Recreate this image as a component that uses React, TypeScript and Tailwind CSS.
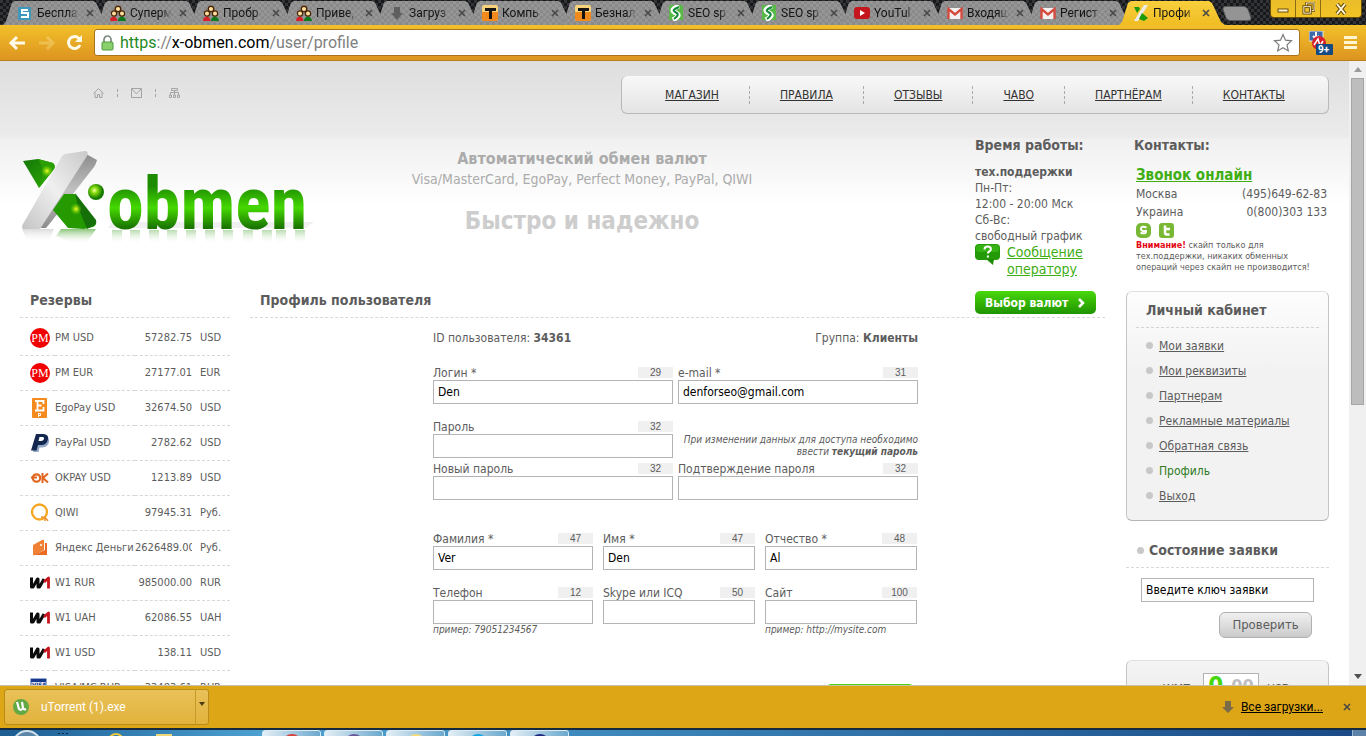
import type { ReactNode } from 'react';

const tabs = [
  { title: 'Беспла', icon: 's' },
  { title: 'Суперм', icon: 'people' },
  { title: 'Пробр', icon: 'people' },
  { title: 'Приве,', icon: 'people' },
  { title: 'Загруз', icon: 'down' },
  { title: 'Компь', icon: 't' },
  { title: 'Безнал', icon: 't' },
  { title: 'SEO sp', icon: 'seo' },
  { title: 'SEO sp', icon: 'seo' },
  { title: 'YouTul', icon: 'youtube' },
  { title: 'Входящ', icon: 'gmail' },
  { title: 'Регист', icon: 'gmail' },
  { title: 'Профи', icon: 'x', active: true },
];

const navLinks = ['МАГАЗИН', 'ПРАВИЛА', 'ОТЗЫВЫ', 'ЧАВО', 'ПАРТНЁРАМ', 'КОНТАКТЫ'];

const reserves = [
  { name: 'PM USD', amount: '57282.75', unit: 'USD', icon: 'pm' },
  { name: 'PM EUR', amount: '27177.01', unit: 'EUR', icon: 'pm' },
  { name: 'EgoPay USD', amount: '32674.50', unit: 'USD', icon: 'ego' },
  { name: 'PayPal USD', amount: '2782.62', unit: 'USD', icon: 'paypal' },
  { name: 'OKPAY USD', amount: '1213.89', unit: 'USD', icon: 'ok' },
  { name: 'QIWI', amount: '97945.31', unit: 'Руб.', icon: 'qiwi' },
  { name: 'Яндекс Деньги', amount: '2626489.00', unit: 'Руб.', icon: 'yandex' },
  { name: 'W1 RUR', amount: '985000.00', unit: 'RUR', icon: 'w1' },
  { name: 'W1 UAH', amount: '62086.55', unit: 'UAH', icon: 'w1' },
  { name: 'W1 USD', amount: '138.11', unit: 'USD', icon: 'w1' },
  { name: 'VISA/MC RUR', amount: '33483.61', unit: 'RUR', icon: 'visa' },
];

const cabinetLinks = [
  'Мои заявки',
  'Мои реквизиты',
  'Партнерам',
  'Рекламные материалы',
  'Обратная связь',
  'Профиль',
  'Выход',
];

function TabIcon({ name }: { name: string }) {
  return (
    <svg viewBox="0 0 16 16" className="h-4 w-4 flex-none">
      {name === 's' && (
        <>
          <rect x="1" y="2" width="13" height="13" rx="1" fill="#3f97bb" />
          <path d="M11 5H5v3h6v4H4" fill="none" stroke="#fff" strokeWidth="2" />
        </>
      )}
      {name === 'people' && (
        <>
          <path d="M0 16c0-6 7-6 7.500 0z" fill="#d6202b" />
          <path d="M8 16c0-6 7.500-6 8 0z" fill="#0c7a1c" />
          <circle cx="8" cy="4" r="2.800" fill="#ffe0a0" stroke="#4a2606" strokeWidth="1.400" />
          <circle cx="4" cy="8.500" r="2.600" fill="#ffe0a0" stroke="#4a2606" strokeWidth="1.200" />
          <circle cx="12" cy="8.500" r="2.600" fill="#ffe0a0" stroke="#4a2606" strokeWidth="1.200" />
        </>
      )}
      {name === 'down' && <path d="M5 2h6v6h3l-6 7-6-7h3z" fill="#5f5f5f" />}
      {name === 't' && (
        <>
          <rect width="16" height="16" rx="2" fill="#f6d27a" />
          <path d="M0 7h16v7a2 2 0 0 1-2 2H2a2 2 0 0 1-2-2z" fill="#f08a1c" />
          <path d="M3 3h11v3H10v8H7V6H3z" fill="#171310" />
        </>
      )}
      {name === 'seo' && (
        <>
          <rect x="1" width="14" height="15" fill="#58b947" />
          <path d="M11 1C3 4 4 6 8 8s2 4-3 7" fill="none" stroke="#fff" strokeWidth="5" />
          <path d="M11 2C4 5 5 6 8 7.500S10 11 6 14" fill="none" stroke="#168a3a" strokeWidth="2" />
        </>
      )}
      {name === 'youtube' && (
        <>
          <rect y="2" width="16" height="12" rx="3" fill="#c4161c" />
          <path d="M6 5l5 3-5 3z" fill="#fff" />
        </>
      )}
      {name === 'gmail' && (
        <>
          <rect x="1" y="3" width="14" height="11" fill="#f3f0ef" />
          <path d="M1.500 14V4L8 9.500 14.500 4v10" fill="none" stroke="#d5483c" strokeWidth="2.300" />
        </>
      )}
      {name === 'x' && (
        <>
          <path d="M11 0h4L5 16H1z" fill="#ececec" />
          <path d="M1 2h5l1 2-3 4z" fill="#1c9a0a" />
          <path d="M9 8l6 5-4 3-5-2z" fill="#1c9a0a" />
        </>
      )}
    </svg>
  );
}

function Cross() {
  return (
    <svg viewBox="0 0 8 8" className="h-2 w-2">
      <path d="M1 1l6 6M7 1L1 7" stroke="#484848" strokeWidth="1.600" />
    </svg>
  );
}

function TabStrip() {
  return (
    <div className="flex h-[25px] flex-none items-end overflow-hidden bg-[#26272a] bg-[repeating-conic-gradient(#17181a_0_25%,#333438_0_50%)] bg-[length:6px_6px] pl-[3px]">
      {tabs.map((tab, i) => (
        <div
          key={i}
          className={`-mr-[13px] flex h-6 w-[106px] flex-none items-center pl-[14px] [clip-path:polygon(0_100%,3px_88%,9px_8%,12px_0,90px_0,93px_8%,102px_88%,106px_100%)] ${
            tab.active
              ? 'z-10 bg-linear-to-b from-[#f8cf3c] to-[#f0bd22]'
              : 'bg-[#8f8f8f] bg-[repeating-conic-gradient(#8a8a8a_0_25%,#969696_0_50%)] bg-[length:6px_6px]'
          }`}
        >
          <TabIcon name={tab.icon} />
          <span className="ml-1 w-[42px] flex-none text-xs whitespace-nowrap text-[#141414] [mask-image:linear-gradient(to_right,#000_75%,transparent)]">
            {tab.title}
          </span>
          <button type="button" aria-label="Закрыть" className="ml-[3px] flex h-4 w-4 items-center justify-center">
            <Cross />
          </button>
        </div>
      ))}
      <button
        type="button"
        aria-label="Новая вкладка"
        className="mb-1 ml-3 h-[15px] w-[26px] flex-none skew-x-[20deg] rounded-sm border border-[#5a5a5a] bg-[#949494]"
      />
      <div className="mr-1 ml-auto flex h-[18px] self-start overflow-hidden rounded-b border border-t-0 border-[#6b4d08] bg-linear-to-b from-[#e9bd2a] to-[#f3c425]">
        <button type="button" aria-label="Свернуть" className="flex w-[25px] items-center justify-center border-r border-[#8a6a14]">
          <svg viewBox="0 0 12 12" className="h-3 w-3">
            <rect x="1" y="6" width="10" height="3" fill="#fff6d8" stroke="#6b4d08" />
          </svg>
        </button>
        <button type="button" aria-label="Развернуть" className="flex w-[25px] items-center justify-center border-r border-[#8a6a14]">
          <svg viewBox="0 0 14 14" className="h-[13px] w-[13px]">
            <rect x="5" y="1" width="8" height="8" fill="none" stroke="#6b4d08" strokeWidth="3" />
            <rect x="5" y="1" width="8" height="8" fill="none" stroke="#fff6d8" />
            <rect x="2" y="5" width="7" height="7" fill="#eec22a" stroke="#6b4d08" strokeWidth="3" />
            <rect x="2" y="5" width="7" height="7" fill="none" stroke="#fff6d8" />
          </svg>
        </button>
        <button type="button" aria-label="Закрыть окно" className="flex w-10 items-center justify-center">
          <svg viewBox="0 0 12 12" className="h-3 w-3">
            <path d="M2 1l8 10M10 1L2 11" stroke="#6b4d08" strokeWidth="4" />
            <path d="M2 1l8 10M10 1L2 11" stroke="#fff6d8" strokeWidth="2" />
          </svg>
        </button>
      </div>
    </div>
  );
}

function Toolbar() {
  return (
    <div className="flex h-9 flex-none items-center border-b border-[#b8801c] bg-linear-to-b from-[#f2c02a] to-[#dd9420] pr-[9px] pl-2">
      <button type="button" aria-label="Назад" className="h-5 w-5">
        <svg viewBox="0 0 20 20" className="h-5 w-5" fill="none" stroke="#fffbe8" strokeWidth="3">
          <path d="M17 10H4M9 4l-6 6 6 6" />
        </svg>
      </button>
      <button type="button" aria-label="Вперед" className="ml-2 h-5 w-5 opacity-30">
        <svg viewBox="0 0 20 20" className="h-5 w-5" fill="none" stroke="#fff2b0" strokeWidth="3">
          <path d="M3 10h13M11 4l6 6-6 6" />
        </svg>
      </button>
      <button type="button" aria-label="Обновить" className="ml-2 h-5 w-5">
        <svg viewBox="0 0 20 20" className="h-5 w-5">
          <path d="M15 5.500A6 6 0 1 0 16 12" fill="none" stroke="#fffbe8" strokeWidth="3" />
          <path d="M18 2v7h-7z" fill="#fffbe8" />
        </svg>
      </button>
      <div className="ml-[10px] flex h-[27px] flex-1 items-center rounded-[3px] border border-[#a8741a] bg-white px-[6px]">
        <svg viewBox="0 0 13 16" className="h-4 w-[13px] flex-none">
          <path d="M3 8V4.500a3.500 3.500 0 0 1 7 0V8" fill="none" stroke="#7b8a80" strokeWidth="1.700" />
          <rect x="1" y="7" width="11" height="8" rx="1" fill="#8ad06c" stroke="#4c9a3c" />
        </svg>
        <a href="#url" className="ml-[6px] flex-1 text-base whitespace-nowrap text-[#808080]">
          <span className="text-[#1e8a1e]">https</span>://<span className="text-black">x-obmen.com</span>/user/profile
        </a>
        <svg viewBox="0 0 20 20" className="h-5 w-5 flex-none" fill="#fff" stroke="#7a7a7a" strokeWidth="1.200">
          <path d="M10 1.500l2.500 5.700 6 .6-4.500 4.100 1.300 6L10 14.800l-5.300 3.100 1.300-6L1.500 7.800l6-.6z" />
        </svg>
      </div>
      <svg viewBox="0 0 24 24" className="ml-[9px] h-6 w-6 flex-none">
        <rect x="0" y="0" width="14" height="10" fill="#3c68a8" stroke="#e8e8e8" />
        <path d="M7 1v6M4 5l3 3 3-3" stroke="#fff" strokeWidth="2" fill="none" />
        <circle cx="10" cy="12" r="7" fill="#d8202a" />
        <path d="M5 14l4-6 2 7 3-5" stroke="#fff" strokeWidth="1.500" fill="none" />
        <rect x="7" y="13" width="17" height="11" rx="1" fill="#134a86" />
        <text x="9" y="22" fontSize="10" fontWeight="700" fill="#fff">
          9+
        </text>
      </svg>
      <button type="button" aria-label="Меню" className="ml-[11px] flex w-[13px] flex-col gap-[2px]">
        <span className="h-[3px] bg-[#fff6d0]" />
        <span className="h-[3px] bg-[#fff6d0]" />
        <span className="h-[3px] bg-[#fff6d0]" />
      </button>
    </div>
  );
}

function Logo() {
  return (
    <a href="#home" aria-label="X-obmen" className="block w-[300px]">
      <svg viewBox="0 0 300 105" className="h-[105px] w-[300px]">
        <defs>
          <linearGradient id="silver" x1="1" y1="0" x2="0" y2="1">
            <stop offset="0" stopColor="#c9c9c9" />
            <stop offset="0.500" stopColor="#efefef" />
            <stop offset="1" stopColor="#c4c4c4" />
          </linearGradient>
          <linearGradient id="edge" x1="0" y1="0" x2="0" y2="1">
            <stop offset="0" stopColor="#8c8c8c" />
            <stop offset="0.500" stopColor="#c2c2c2" />
            <stop offset="1" stopColor="#8c8c8c" />
          </linearGradient>
          <linearGradient id="word" x1="0" y1="0" x2="0" y2="1">
            <stop offset="0.300" stopColor="#1d8c00" />
            <stop offset="0.550" stopColor="#46d800" />
            <stop offset="0.780" stopColor="#1a7400" />
          </linearGradient>
          <linearGradient id="leaf" x1="0" y1="0" x2="1" y2="1">
            <stop offset="0" stopColor="#14750a" />
            <stop offset="1" stopColor="#2fae00" />
          </linearGradient>
          <linearGradient id="fade" x1="0" y1="0" x2="0" y2="1">
            <stop offset="0" stopColor="#3a9d20" stopOpacity="0.600" />
            <stop offset="1" stopColor="#fff" stopOpacity="0" />
          </linearGradient>
          <linearGradient id="greyfade" x1="0" y1="0" x2="0" y2="1">
            <stop offset="0" stopColor="#999" stopOpacity="0.350" />
            <stop offset="1" stopColor="#fff" stopOpacity="0" />
          </linearGradient>
          <radialGradient id="ball" cx="0.400" cy="0.400">
            <stop offset="0" stopColor="#fdffb0" />
            <stop offset="0.350" stopColor="#8be010" />
            <stop offset="1" stopColor="#167a00" />
          </radialGradient>
          <radialGradient id="glow">
            <stop offset="0" stopColor="#f6ff20" />
            <stop offset="1" stopColor="#5fd000" stopOpacity="0" />
          </radialGradient>
        </defs>
        <path d="M88 78l4-6h202l-8 6z" fill="#000" opacity="0.060" />
        <path d="M41 79h35l-8 12q-9 6-20 0l-12-5z" fill="url(#fade)" />
        <path d="M2 79h32l-6 14H8z" fill="url(#greyfade)" />
        <path d="M66 4l11 6q-1 4-3 7L31 72l-5 6H19z" fill="url(#edge)" />
        <path d="M41 8q1-3 4-4l20-3q4 0 2 5L20 79H3q-2-2 0-5z" fill="url(#silver)" />
        <path d="M3 11l15-2 15 4q3 3 1 6L19 38z" fill="url(#leaf)" />
        <path d="M18 9l15 4q3 3 1 6L19 38q8-16-1-29z" fill="#2b9f04" />
        <circle cx="27" cy="21" r="6" fill="url(#glow)" />
        <path d="M44 44h11l21 27q1 4-3 6l-9 2-16-1L33 60z" fill="#249a00" />
        <path d="M55 43l21 27q1 4-3 6l-6 3-9-22z" fill="#16700a" />
        <circle cx="56" cy="59" r="6" fill="url(#glow)" />
        <circle cx="76" cy="42" r="8" fill="url(#ball)" />
        <text
          x="87"
          y="79"
          fontSize="74"
          fontWeight="700"
          fill="url(#word)"
          className="font-['Liberation_Sans_Narrow','Roboto_Condensed','Roboto',sans-serif]"
        >
          obmen
        </text>
        {[92, 110, 129, 147, 166, 185, 203, 223, 242, 256, 275].map((x) => (
          <rect key={x} x={x} y="80" width="10" height="14" fill="url(#fade)" opacity="0.600" />
        ))}
      </svg>
    </a>
  );
}

function SiteHeader() {
  return (
    <header className="px-5 pt-[15px]">
      <div className="flex justify-between">
        <div className="mt-[11px] ml-[73px] flex h-3 items-center gap-[13px] text-[#a4a4a4]">
          <a href="#home" aria-label="Главная">
            <svg viewBox="0 0 11 10" className="h-[10px] w-[11px]" fill="none" stroke="currentColor">
              <path d="M0.500 5.500l5-5 5 5M2 4.500v5h2.500v-3h2v3H9v-5" />
            </svg>
          </a>
          <i className="h-2 border-l border-dashed border-current" />
          <a href="#mail" aria-label="Почта">
            <svg viewBox="0 0 11 10" className="h-[10px] w-[11px]" fill="none" stroke="currentColor">
              <path d="M0.500 0.500h10v9H0.500zM1 1l4.500 5L10 1" />
            </svg>
          </a>
          <i className="h-2 border-l border-dashed border-current" />
          <a href="#map" aria-label="Карта сайта">
            <svg viewBox="0 0 11 10" className="h-[10px] w-[11px]" fill="none" stroke="currentColor">
              <path d="M2.500 0.500h6v2h-6zM5.500 3v4M1.500 7V4.500h8V7M0.500 7h2v2.500h-2zM4.500 7h2v2.500h-2zM8.500 7h2v2.500h-2z" />
            </svg>
          </a>
        </div>
        <nav className="flex h-[38px] w-[708px] items-center justify-center rounded-md border-r border-b border-l border-[#b9b9b9] bg-linear-to-b from-[#f8f8f8] to-[#e4e4e4] text-xs text-[#333]">
          {navLinks.map((link, i) => (
            <span key={link} className={`flex h-[18px] items-center px-[30px] ${i ? 'border-l border-dashed border-[#aaa]' : ''}`}>
              <a href="#nav" className="underline">
                {link}
              </a>
            </span>
          ))}
        </nav>
      </div>

      <div className="flex h-[177px]">
        <div className="pt-9">
          <Logo />
        </div>
        <div className="w-[524px] pt-[35px] text-center">
          <p className="text-base leading-5 font-bold text-[#ababab]">Автоматический обмен валют</p>
          <p className="text-sm leading-5 text-[#ababab]">Visa/MasterCard, EgoPay, Perfect Money, PayPal, QIWI</p>
          <p className="mt-5 text-2xl leading-6 font-bold text-[#cdcdcd]">Быстро и надежно</p>
        </div>
        <div className="ml-auto w-[151px] pt-[23px] text-xs leading-4">
          <h2 className="text-sm leading-4 font-bold">Время работы:</h2>
          <p className="mt-[11px] font-bold">тех.поддержки</p>
          <p>
            Пн-Пт:
            <br />
            12:00 - 20:00 Мск
            <br />
            Сб-Вс:
            <br />
            свободный график
          </p>
          <div className="flex">
            <svg viewBox="0 0 26 21" className="h-[21px] w-[26px] flex-none">
              <rect width="25" height="16" y="0" rx="4" fill="#249a08" />
              <path d="M11 15h8l-1 6z" fill="#1f8a06" />
              <rect x="1" y="1" width="23" height="7" rx="3" fill="#43c41c" opacity="0.600" />
              <path d="M9.500 5.500q0-3 3.200-3t3.200 2.700q0 1.500-1.700 2.300-1.300.7-1.300 2M12.900 11.500v2" stroke="#fff" strokeWidth="2" fill="none" />
            </svg>
            <a href="#operator" className="ml-[6px] text-sm leading-[17px] text-[#3fae14] underline">
              Сообщение
              <br />
              оператору
            </a>
          </div>
        </div>
        <div className="w-[203px] pt-[23px] pr-[2px] pl-[10px] text-xs">
          <h2 className="-ml-[2px] text-sm leading-4 font-bold">Контакты:</h2>
          <a href="#call" className="mt-3 block text-[15px] leading-5 font-bold text-[#3fae14] underline">
            Звонок онлайн
          </a>
          <p className="flex justify-between leading-[18px]">
            Москва <span>(495)649-62-83</span>
          </p>
          <p className="flex justify-between leading-[18px]">
            Украина <span>0(800)303 133</span>
          </p>
          <div className="mt-[2px] flex gap-2">
            <svg viewBox="0 0 15 15" className="h-[15px] w-[15px]">
              <rect width="15" height="15" rx="5" fill="#79b834" />
              <path d="M10.500 4.500q-5-2-5.500 1t5 2.500q.5 3.500-5.500 1.700" stroke="#fff" strokeWidth="2" fill="none" />
            </svg>
            <svg viewBox="0 0 15 15" className="h-[15px] w-[15px]">
              <rect width="15" height="15" rx="3" fill="#79b834" />
              <path d="M6 2.500v7q0 2 2 2h2.500M6 6h5" stroke="#fff" strokeWidth="2.500" fill="none" />
            </svg>
          </div>
          <p className="mt-[2px] text-[9px] leading-[11px] whitespace-nowrap">
            <b className="text-[#e30613]">Внимание!</b> скайп только для
            <br />
            тех.поддержки, никаких обменных
            <br />
            операций через скайп не производится!
          </p>
        </div>
      </div>
    </header>
  );
}

function ReserveIcon({ name }: { name: string }) {
  return (
    <svg viewBox="0 0 20 20" className="block h-5 w-5">
      {name === 'pm' && (
        <>
          <circle cx="10" cy="10" r="10" fill="#f00000" />
          <text x="10" y="14" fontSize="12" textAnchor="middle" fill="#fff" className="font-['Liberation_Serif',serif]">
            PM
          </text>
        </>
      )}
      {name === 'ego' && (
        <>
          <rect x="2" width="15" height="20" rx="1" fill="#f58a1f" />
          <path d="M5 3h8.500v3M7.500 3v9M7.500 7.500h4M5 12.500h8.500V9" stroke="#fff" strokeWidth="1.800" fill="none" />
          <path d="M8.500 19v-3.500h2v2h-2" stroke="#fff" fill="none" />
        </>
      )}
      {name === 'paypal' && (
        <>
          <path d="M8 4h8q4 1 3 5-1 5-7 5.500H9.500L8.500 19H3z" fill="#8fa6c4" />
          <path d="M6 1h8q5 1 4 5-1 6-7 6H8l-1.500 5.500H1z" fill="#14274f" />
          <path d="M9.500 4h3q2 0 1.500 2T11 8H8.500z" fill="#fff" />
        </>
      )}
      {name === 'ok' && (
        <>
          <circle cx="6.500" cy="10" r="3.700" fill="none" stroke="#e2661f" strokeWidth="2.200" />
          <path d="M1 9.500h6M12.500 5v10M18 5.500L13 10l5 4.500" fill="none" stroke="#e2661f" strokeWidth="2" />
        </>
      )}
      {name === 'qiwi' && (
        <>
          <circle cx="9.500" cy="9" r="7.500" fill="none" stroke="#f6a623" strokeWidth="2.300" />
          <path d="M11 14q5 0 7 4M14 17h2" fill="none" stroke="#f0902a" strokeWidth="1.300" />
        </>
      )}
      {name === 'yandex' && (
        <>
          <path d="M3 7l9-5q2-1 2 1v9L5 17q-2 1-2-1z" fill="#f08034" />
          <path d="M15 5h2v12H4l11-5z" fill="#ea6a22" />
          <circle cx="11" cy="7" r="1" fill="#fff" />
        </>
      )}
      {name === 'w1' && (
        <>
          <path d="M1.500 4.500v9.500h1.500L7.500 6H8v8h1.500L14 6" fill="none" stroke="#0c0c0c" strokeWidth="3" strokeLinejoin="round" />
          <path d="M14 9l4.500-4v10.500" fill="none" stroke="#c8141c" strokeWidth="2.800" strokeLinejoin="round" />
        </>
      )}
      {name === 'visa' && (
        <>
          <rect x="1" y="1" width="15" height="14" fill="#e8eef8" stroke="#2a4f9c" />
          <rect x="1" y="1" width="15" height="3" fill="#17398c" />
          <text x="2" y="9" fontSize="6" fontWeight="700" fill="#17398c">
            VISA
          </text>
        </>
      )}
    </svg>
  );
}

function Reserves() {
  return (
    <aside>
      <h2 className="mb-[2px] h-[27px] border-b border-dashed border-[#d8d8d8] pl-[10px] text-sm leading-[18px] font-bold">Резервы</h2>
      <table className="w-full table-fixed border-collapse text-[11px]">
        <tbody>
          {reserves.map((row) => (
            <tr key={row.name} className="h-[35px] border-b border-dashed border-[#d8d8d8] whitespace-nowrap">
              <td className="w-[35px] pt-px pl-[10px]">
                <ReserveIcon name={row.icon} />
              </td>
              <td className="w-[80px] pt-px">{row.name}</td>
              <td className="overflow-hidden pt-px text-right">{row.amount}</td>
              <td className="w-[38px] pt-px pl-2">{row.unit}</td>
            </tr>
          ))}
        </tbody>
      </table>
    </aside>
  );
}

type FieldProps = {
  id: string;
  label: string;
  count: number;
  value?: string;
  type?: string;
  hint?: string;
  width: string;
};

function Field({ id, label, count, value = '', type = 'text', hint, width }: FieldProps) {
  return (
    <div className={width}>
      <div className="flex h-[14px] justify-between">
        <label htmlFor={id} className="text-xs leading-[14px] whitespace-nowrap">
          {label}
        </label>
        <span className="mt-px h-[11px] w-[35px] bg-[#f0f0f0] text-center font-['Liberation_Sans',sans-serif] text-[10px] leading-[11px]">
          {count}
        </span>
      </div>
      <input id={id} type={type} defaultValue={value} className="block h-6 w-full border border-[#b4b4b4] bg-white px-1 text-xs text-black" />
      {hint && <p className="h-3 text-[10px] leading-3 italic">{hint}</p>}
    </div>
  );
}

function ProfileForm() {
  return (
    <main className="pr-px">
      <div className="flex h-[27px] justify-between border-b border-dashed border-[#d8d8d8] pr-[9px] pl-[10px]">
        <h1 className="text-sm leading-[18px] font-bold">Профиль пользователя</h1>
        <button
          type="button"
          className="flex h-[23px] w-[121px] items-center justify-between rounded-[5px] bg-linear-to-b from-[#48d80c] to-[#1f9400] px-[10px] text-xs font-bold text-white"
        >
          Выбор валют
          <svg viewBox="0 0 8 10" className="h-[10px] w-2">
            <path d="M1 1l4 4-4 4" fill="none" stroke="#fff" strokeWidth="2.500" />
          </svg>
        </button>
      </div>
      <form className="mx-auto mt-3 w-[489px] pr-1">
        <div className="flex justify-between text-xs leading-4">
          <p>
            ID пользователя: <b>34361</b>
          </p>
          <p>
            Группа: <b>Клиенты</b>
          </p>
        </div>
        <div className="mt-5 flex gap-[5px]">
          <Field id="login" label="Логин *" count={29} value="Den" width="w-60" />
          <Field id="email" label="e-mail *" count={31} value="denforseo@gmail.com" width="w-60" />
        </div>
        <div className="mt-4 flex items-end gap-[5px]">
          <Field id="password" label="Пароль" count={32} type="password" width="w-60" />
          <p className="w-60 text-right text-[10px] leading-3 whitespace-nowrap italic">
            При изменении данных для доступа необходимо
            <br />
            ввести <b>текущий пароль</b>
          </p>
        </div>
        <div className="mt-1 flex gap-[5px]">
          <Field id="newpass" label="Новый пароль" count={32} type="password" width="w-60" />
          <Field id="confirm" label="Подтверждение пароля" count={32} type="password" width="w-60" />
        </div>
        <div className="mt-8 flex gap-[10px]">
          <Field id="surname" label="Фамилия *" count={47} value="Ver" width="w-40" />
          <Field id="name" label="Имя *" count={47} value="Den" width="w-[152px]" />
          <Field id="patronymic" label="Отчество *" count={48} value="Al" width="w-[152px]" />
        </div>
        <div className="mt-4 flex gap-[10px]">
          <Field id="phone" label="Телефон" count={12} hint="пример: 79051234567" width="w-40" />
          <Field id="skype" label="Skype или ICQ" count={50} width="w-[152px]" />
          <Field id="site" label="Сайт" count={100} hint="пример: http://mysite.com" width="w-[152px]" />
        </div>
        <button
          type="button"
          aria-label="Сохранить"
          className="mt-12 mr-1 ml-auto block h-6 w-[88px] rounded-[5px] bg-linear-to-b from-[#48d80c] to-[#1f9400]"
        />
      </form>
    </main>
  );
}

function Panel({ children, className = '' }: { children: ReactNode; className?: string }) {
  return (
    <div className={`rounded-md border border-t-[#e0e0e0] border-r-[#c4c4c4] border-b-[#b4b4b4] border-l-[#c4c4c4] bg-linear-to-b ${className}`}>
      {children}
    </div>
  );
}

function RightColumn() {
  return (
    <aside>
      <Panel className="h-[230px] from-[#fdfdfd] via-[#f2f2f2] via-35% to-[#f2f2f2] px-[9px]">
        <h2 className="h-9 border-b border-dashed border-[#d4d4d4] pl-[10px] text-sm leading-9 font-bold">Личный кабинет</h2>
        <ul className="mt-[5px] pl-[10px] text-xs">
          {cabinetLinks.map((link) => (
            <li key={link} className="flex h-[25px] items-center gap-[6px]">
              <i className="h-[7px] w-[7px] rounded-full bg-[#c8c8c8]" />
              <a href="#cabinet" className={link === 'Профиль' ? 'text-[#2f7a1c]' : 'underline'}>
                {link}
              </a>
            </li>
          ))}
        </ul>
      </Panel>

      <h2 className="mt-5 flex h-[27px] items-center gap-[5px] border-b border-dashed border-[#d8d8d8] pb-2 pl-[11px] text-sm font-bold">
        <i className="h-[7px] w-[7px] rounded-full bg-[#c8c8c8]" />
        <label htmlFor="key">Состояние заявки</label>
      </h2>
      <form className="mt-[10px] flex flex-col items-end gap-[10px] px-[15px]">
        <input id="key" defaultValue="Введите ключ заявки" className="block h-6 w-full border border-[#b4b4b4] bg-white px-1 text-xs text-black" />
        <button
          type="button"
          className="mr-[2px] h-[26px] w-[93px] rounded-md border border-[#b0b0b0] bg-linear-to-b from-[#f0f0f0] to-[#cbcbcb] text-[13px]"
        >
          Проверить
        </button>
      </form>

      <Panel className="mt-[22px] flex h-[90px] gap-2 from-[#f4f4f4] to-[#e4e4e4] pt-3 pl-9 text-xs">
        <span className="w-8 pt-2">WMZ</span>
        <span className="flex h-8 w-14 items-start justify-center gap-2 border border-[#b4b4b4] bg-white text-lg leading-6 font-bold text-[#bdbdbd]">
          <b className="text-2xl leading-6 text-[#46d80c]">0</b>00
        </span>
        <span className="pt-2">USD</span>
      </Panel>
    </aside>
  );
}

function Scrollbar() {
  return (
    <div className="flex w-[17px] flex-none flex-col items-center bg-[#f0f0f0]">
      <svg viewBox="0 0 8 5" className="my-[6px] h-[5px] w-2 flex-none">
        <path d="M0 5l4-5 4 5z" fill="#9a9a9a" />
      </svg>
      <div className="h-[327px] w-[13px] border border-[#a6a6a6] bg-[#bdbdbd]" />
      <svg viewBox="0 0 8 5" className="mt-auto mb-[6px] h-[5px] w-2 flex-none">
        <path d="M0 0l4 5 4-5z" fill="#505050" />
      </svg>
    </div>
  );
}

function DownloadBar() {
  return (
    <div className="flex h-[43px] flex-none items-center border-t border-[#c9c2a8] bg-[#dda617] px-1 text-xs">
      <div className="flex h-9 w-[205px] rounded-[3px] border border-[#b98b17] bg-linear-to-b from-[#e8c158] to-[#e2b33c] text-white">
        <button type="button" className="flex flex-1 items-center gap-3 pl-2">
          <svg viewBox="0 0 16 16" className="h-4 w-4">
            <circle cx="8" cy="8" r="8" fill="#62a845" />
            <path d="M4 3l2 7q2 2 4-1L9 3M10 9q1 2 3 1" fill="none" stroke="#fff" strokeWidth="2.200" />
          </svg>
          uTorrent (1).exe
        </button>
        <button type="button" aria-label="Ещё" className="flex w-[13px] items-start justify-center border-l border-[#c59a2a] pt-3">
          <svg viewBox="0 0 6 4" className="h-1 w-[6px]">
            <path d="M0 0h6L3 4z" fill="#4a3a10" />
          </svg>
        </button>
      </div>
      <svg viewBox="0 0 12 12" className="ml-auto h-3 w-3">
        <path d="M3 0h6v6h3l-6 6-6-6h3z" fill="#7a6c48" />
      </svg>
      <a href="#downloads" className="ml-[7px] text-black underline">
        Все загрузки...
      </a>
      <button type="button" aria-label="Закрыть" className="mr-[11px] ml-5">
        <Cross />
      </button>
    </div>
  );
}

function Taskbar() {
  return (
    <div className="flex h-2 flex-none overflow-hidden border-t-2 border-[#152a3e] bg-linear-to-r from-[#1c5d92] via-[#4ea4d4] via-20% to-[#1a4a86]">
      <span className="ml-3 h-[30px] w-[30px] flex-none rounded-full border-2 border-[#cfe0ea] bg-[#5c86a8]" />
      <span className="mt-[3px] ml-4 flex gap-[2px]">
        <i className="h-px w-[2px] bg-[#0c2a44]" />
        <i className="h-px w-[2px] bg-[#0c2a44]" />
        <i className="h-px w-[2px] bg-[#0c2a44]" />
      </span>
      <span className="mt-[3px] ml-10 h-4 w-4 flex-none rounded-full border-2 border-[#e8c840]" />
      <span className="mt-1 ml-8 h-3 w-4 flex-none bg-[#f0d878]" />
      <div className="ml-[90px] flex gap-[3px]">
        {['bg-[#d8403a]', 'bg-[#6a5a9c]', 'bg-[#f4dc7c]', 'bg-[#10a8e4]', 'bg-[#1c2a80]'].map((color) => (
          <span key={color} className="flex h-[30px] w-[59px] justify-center rounded-t-[3px] border border-[#dcecf4] bg-linear-to-r from-[#e4eff6] to-[#6aa8cc] pt-[3px]">
            <i className={`h-5 w-5 rounded-full ${color}`} />
          </span>
        ))}
      </div>
      <span className="ml-auto w-[14px] border-l border-[#9ab8d4] bg-[#5c82a8]" />
    </div>
  );
}

export default function App() {
  return (
    <div className="flex h-screen flex-col overflow-hidden font-['Roboto','Noto_Sans',sans-serif]">
      <TabStrip />
      <Toolbar />
      <div className="flex min-h-0 flex-1 bg-white">
        <div className="min-w-0 flex-1 overflow-hidden bg-[linear-gradient(#dedede,#ebebeb_76px,#f0f0f0_78px,#fff_145px)] font-['DejaVu_Sans_Condensed','Noto_Sans',sans-serif] text-[#5c5c5c]">
          <SiteHeader />
          <div className="grid grid-cols-[210px_1fr_203px] gap-5 px-5">
            <Reserves />
            <ProfileForm />
            <RightColumn />
          </div>
        </div>
        <Scrollbar />
      </div>
      <DownloadBar />
      <Taskbar />
    </div>
  );
}
